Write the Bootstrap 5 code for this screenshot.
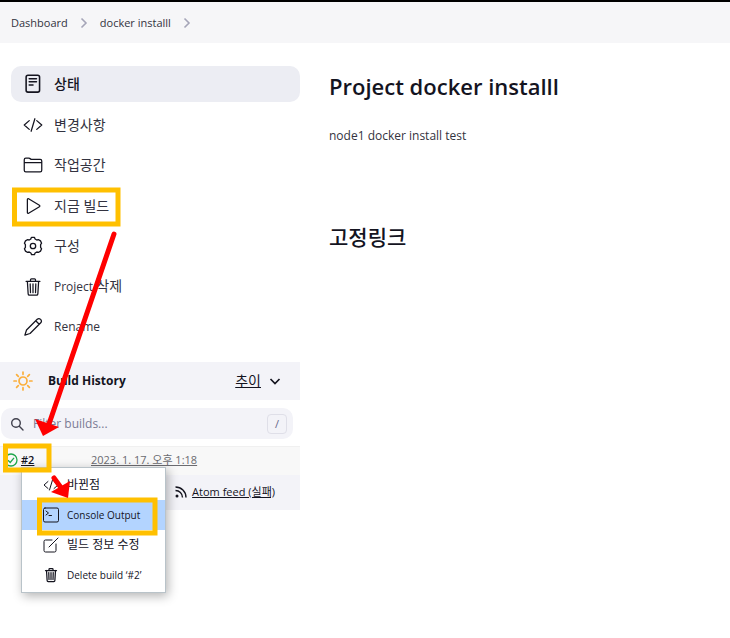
<!DOCTYPE html>
<html lang="ko">
<head>
<meta charset="utf-8">
<meta name="viewport" content="width=device-width, initial-scale=1">
<title>docker installl [Jenkins]</title>
<link href="https://cdn.jsdelivr.net/npm/bootstrap@5.3.0/dist/css/bootstrap.min.css" rel="stylesheet">
<style>
  body { font-family: "Open Sans", "Noto Sans CJK KR", sans-serif; font-size: 12px; line-height: 20px; color: #14141f; background: #fff; }
  a { color: inherit; }
  svg { flex: none; }
  .ico { fill: none; stroke: #14141f; stroke-width: 32; stroke-linecap: round; stroke-linejoin: round; }
  .ico-bold { stroke-width: 40; }
  .ico-gear { stroke-width: 1.3; }
  .ico-thin { stroke-width: 1; }
  .ko { font-size: 14px; }
  .topline { height: 2px; background: #000; }
  .crumbs { background: #f6f6f8; padding: 11px 11px 10px; gap: 11px; font-size: 11px; color: #333340; }
  .side { width: 300px; flex: none; padding-top: 23px; }
  .tasks { min-height: 279px; margin-left: 11px; }
  .task { height: 36px; padding: 0 12px; gap: 11px; border-radius: 10px; color: #333340; }
  .task.active { background: #ecedf3; color: #14141f; font-weight: 500; }
  .task:hover { background: #ecedf3; }
  .history { margin-top: 17px; position: relative; }
  .history-head { background: #f3f3f8; height: 38px; padding: 0 19px 0 13px; }
  .history-title { font-size: 12px; line-height: 20px; font-weight: 700; margin: 0 0 0 15px; }
  .filter { background: #f3f3f8; border-radius: 10px; height: 31px; margin: 8px 7px 7px 1px; padding: 0 6px 0 9px; }
  .filter input { font-size: 12px; color: #14141f; min-width: 0; margin-left: 9px; }
  .filter input::placeholder { color: #7b7b94; opacity: 1; }
  .filter kbd { width: 20px; height: 20px; line-height: 18px; border: 1px solid #dfdfe8; border-radius: 4px; color: #66668a; background: none; padding: 0; font-family: inherit; font-size: 11px; }
  .build { background: #f8f8f8; border-top: 1px solid #f0f0f0; height: 29px; padding: 0 0 3px 4px; font-size: 11px; }
  .build-no { width: 70px; margin-left: 3px; font-weight: 600; }
  .build-date { color: #6b6b70; }
  .feed { background: #f3f3f8; height: 35px; padding: 0 25px 2px 0; gap: 5px; font-size: 11px; }
  .build-menu { position: absolute; left: 21px; top: 105px; width: 145px; border: 1px solid #b9c3c9; background: #fff; box-shadow: 2px 3px 10px rgba(0,0,0,.3); padding: 2px 0; font-size: 10px; }
  .build-menu .ko { font-size: 12px; }
  .build-menu a { height: 30px; padding-left: 21px; gap: 8px; color: #14141f; }
  .build-menu a.current { background: #b3d4ff; }
  .main { padding: 26px 29px; }
  .main h1 { font-size: 22px; line-height: 34px; font-weight: 600; margin: 0 0 23px; }
  .main p { margin: 0 0 75px; color: #333340; }
  .main h2 { font-size: 21px; line-height: 32px; font-weight: 500; margin: 0; }
  .marks { position: absolute; left: 0; top: 0; pointer-events: none; z-index: 5; }
</style>
<script src="https://cdn.jsdelivr.net/npm/bootstrap@5.3.0/dist/js/bootstrap.bundle.min.js"></script>
</head>
<body class="position-relative min-vh-100">
<div class="topline"></div>
<nav class="crumbs d-flex align-items-center" aria-label="breadcrumb">
  <a href="#" class="text-decoration-none">Dashboard</a>
  <svg width="10" height="12" viewBox="0 0 10 12" fill="none" stroke="#a5a5b8" stroke-width="1.6"><path d="M2.500 1.500 7 6 2.500 10.500"/></svg>
  <a href="#" class="text-decoration-none">docker installl</a>
  <svg width="10" height="12" viewBox="0 0 10 12" fill="none" stroke="#a5a5b8" stroke-width="1.6"><path d="M2.500 1.500 7 6 2.500 10.500"/></svg>
</nav>

<div class="d-flex">
  <aside class="side">
    <nav class="tasks d-flex flex-column justify-content-between" aria-label="Project">
      <a href="#" class="task active ko d-flex align-items-center text-decoration-none">
        <svg class="ico ico-bold" width="20" height="20" viewBox="0 0 512 512"><rect x="80" y="32" width="344" height="432" rx="48"/><path d="M160 120h184M160 200h184M160 280h96"/></svg>상태</a>
      <a href="#" class="task ko d-flex align-items-center text-decoration-none">
        <svg class="ico" width="20" height="20" viewBox="0 0 512 512"><path d="M160 368 32 256l128-112M352 368l128-112-128-112M304 96l-96 320"/></svg>변경사항</a>
      <a href="#" class="task ko d-flex align-items-center text-decoration-none">
        <svg class="ico" width="20" height="20" viewBox="0 0 512 512"><path d="M440 432H72a40 40 0 0 1-40-40V120a40 40 0 0 1 40-40h75.900a40 40 0 0 1 22.200 6.700l27.800 18.600a40 40 0 0 0 22.200 6.700H440a40 40 0 0 1 40 40v240a40 40 0 0 1-40 40zM32 192h448"/></svg>작업공간</a>
      <a href="#" class="task ko d-flex align-items-center text-decoration-none">
        <svg class="ico" width="20" height="20" viewBox="0 0 512 512"><path d="M112 91v330c0 17.400 17 28.500 31 20.200l277-165c14-8.300 14-32 0-40.400l-277-165c-14-8.300-31 2.800-31 20.200z"/></svg>지금 빌드</a>
      <a href="#" class="task ko d-flex align-items-center text-decoration-none">
        <svg class="ico ico-gear" width="20" height="20" viewBox="0 0 20 20"><path d="M7.900 2.400 8.600 1.300h2.800l.7 1.700 1.700 1 1.900-.3 1.800 1.200 1.100 2.300-1 1.500v2.600l1 1.500-1.100 2.300-1.800 1.200-1.900-.3-1.700 1-.7 1.700H8.600l-.7-1.700-1.700-1-1.900.3-1.800-1.200-1.100-2.300 1-1.500V8.700l-1-1.500 1.100-2.300 1.800-1.200 1.900.3 1.700-1z"/><circle cx="10" cy="10" r="2.700"/></svg>구성</a>
      <a href="#" class="task d-flex align-items-center text-decoration-none">
        <svg class="ico" width="20" height="20" viewBox="0 0 512 512"><path d="m112 112 20 320c1 18.500 14.400 32 32 32h184c17.700 0 30.900-13.500 32-32l20-320M80 112h352M192 112V72c0-13 11-24 24-24h80c13 0 24 11 24 24v40M256 176v224M184 176l8 224M328 176l-8 224"/></svg><span>Project <span class="ko">삭제</span></span></a>
      <a href="#" class="task d-flex align-items-center text-decoration-none">
        <svg class="ico" width="20" height="20" viewBox="0 0 512 512"><path d="M364 58 90 332l-42 132 132-42 274-274c50-60-30-140-90-90zM325 97l90 90"/></svg>Rename</a>
    </nav>

    <section class="history">
      <div class="history-head d-flex align-items-center">
        <svg width="20" height="20" viewBox="0 0 20 20" fill="none" stroke="#fbaf3c" stroke-width="1.700" stroke-linecap="round"><circle cx="10" cy="10" r="4"/><path d="M10 1v2.300M10 16.700V19M1 10h2.300M16.700 10H19M3.600 3.600l1.700 1.700M14.700 14.700l1.700 1.700M3.600 16.400l1.700-1.700M14.700 5.300l1.700-1.700"/></svg>
        <h2 class="history-title">Build History</h2>
        <a href="#" class="ko ms-auto me-2">추이</a>
        <svg width="12" height="12" viewBox="0 0 12 12" fill="none" stroke="#14141f" stroke-width="1.700"><path d="m1.500 4 4.500 4.500L10.500 4"/></svg>
      </div>
      <div class="filter d-flex align-items-center">
        <svg width="14" height="14" viewBox="0 0 14 14" fill="none" stroke="#40404d" stroke-width="1.400" stroke-linecap="round"><circle cx="6" cy="6" r="4.300"/><path d="m9.300 9.300 3.700 3.700"/></svg>
        <input class="flex-grow-1 border-0 bg-transparent p-0" type="text" placeholder="Filter builds..." aria-label="Filter builds">
        <kbd class="text-center">/</kbd>
      </div>
      <div class="build d-flex align-items-center">
        <svg width="14" height="14" viewBox="0 0 14 14" fill="none" stroke="#1ea64b" stroke-width="1.300"><circle cx="7" cy="7" r="6"/><path d="m4 7.300 2.200 2.200L10 4.800"/></svg>
        <a href="#" class="build-no">#2</a>
        <a href="#" class="build-date">2023. 1. 17. 오후 1:18</a>
      </div>
      <div class="feed d-flex align-items-center justify-content-end">
        <svg width="12" height="12" viewBox="0 0 12 12" fill="none" stroke="#14141f" stroke-width="1.400"><circle cx="2" cy="10" r="1.500" fill="#14141f" stroke="none"/><path d="M.5 4.500A7 7 0 0 1 7.500 11.500M.5 1A10.500 10.500 0 0 1 11 11.500"/></svg>
        <a href="#">Atom feed (실패)</a>
      </div>

      <nav class="build-menu" aria-label="Build #2">
        <a href="#" class="ko d-flex align-items-center text-decoration-none">
          <svg class="ico" width="16" height="16" viewBox="0 0 512 512"><path d="M160 368 32 256l128-112M352 368l128-112-128-112M304 96l-96 320"/></svg>바뀐점</a>
        <a href="#" class="current d-flex align-items-center text-decoration-none">
          <svg class="ico ico-thin" width="16" height="16" viewBox="0 0 16 16"><rect x=".5" y="1" width="15" height="14" rx="1.500"/><path d="m3 4 2.500 2L3 8M6 8.500h2.500"/></svg>Console Output</a>
        <a href="#" class="ko d-flex align-items-center text-decoration-none">
          <svg class="ico ico-thin" width="16" height="16" viewBox="0 0 16 16"><path d="M9 3H2.500A1.500 1.500 0 0 0 1 4.500v9A1.500 1.500 0 0 0 2.500 15h9a1.500 1.500 0 0 0 1.500-1.500V7M6 10l9-9"/></svg>빌드 정보 수정</a>
        <a href="#" class="d-flex align-items-center text-decoration-none">
          <svg class="ico ico-bold" width="16" height="16" viewBox="0 0 512 512"><path d="m112 112 20 320c1 18.500 14.400 32 32 32h184c17.700 0 30.900-13.500 32-32l20-320M80 112h352M192 112V72c0-13 11-24 24-24h80c13 0 24 11 24 24v40M256 176v224M184 176l8 224M328 176l-8 224"/></svg>Delete build ‘#2’</a>
      </nav>
    </section>
  </aside>

  <main class="main flex-grow-1">
    <h1>Project docker installl</h1>
    <p>node1 docker install test</p>
    <h2>고정링크</h2>
  </main>
</div>

<!-- Step highlights and arrows over the page -->
<svg class="marks" width="180" height="600" viewBox="0 0 180 600" aria-hidden="true">
  <g fill="none" stroke="#ffc000" stroke-width="5">
    <rect x="14.500" y="190" width="103.500" height="34"/>
    <rect x="5.500" y="446" width="43.500" height="24"/>
    <rect x="39.500" y="500" width="115.500" height="33"/>
  </g>
  <path d="M114 234 49 424" stroke="#f00" stroke-width="5" stroke-linecap="round"/>
  <path d="m35 419 24 8-16 9z" fill="#f00"/>
  <path d="m54 478 8 11" stroke="#f00" stroke-width="5" stroke-linecap="round"/>
  <path d="m70 481-2 17-17-6z" fill="#f00"/>
</svg>
</body>
</html>
